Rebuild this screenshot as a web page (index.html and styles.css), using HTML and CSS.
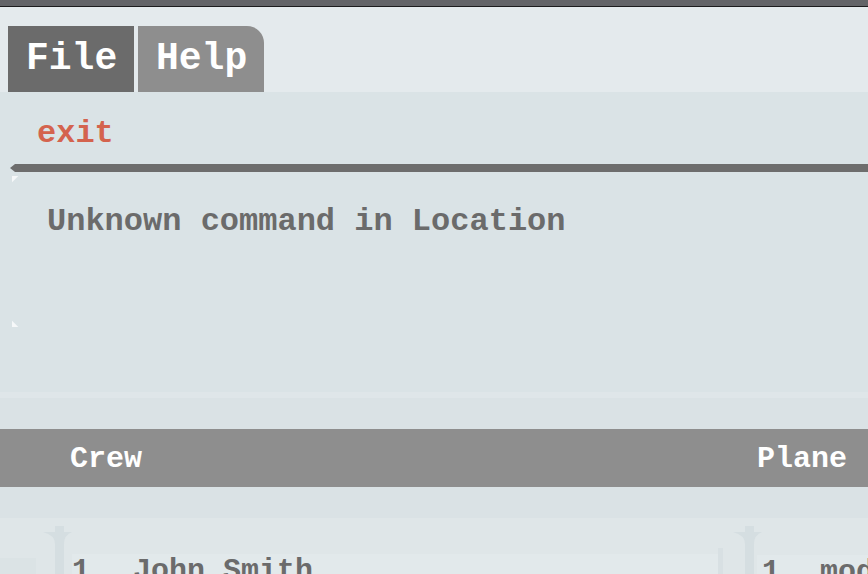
FILE: index.html
```html
<!DOCTYPE html>
<html lang="en">
<head>
<meta charset="utf-8">
<title>Console</title>
<link rel="stylesheet" href="styles.css">
</head>
<body>
  <div class="topbar"></div>
  <nav class="tabs">
    <div class="tab tab-file">File</div>
    <div class="tab tab-help">Help</div>
  </nav>
  <section class="console">
    <div class="cmd">exit</div>
    <div class="rule"></div>
    <div class="output">Unknown command in Location</div>
  </section>
  <div class="strip"></div>
  <div class="spacer"></div>
  <header class="table-head">
    <span>Crew</span>
    <span>Plane</span>
  </header>
  <div class="spacer2"></div>
  <div class="lists">
    <div class="side"></div>
    <div class="handle">
      <svg width="29" height="48" viewBox="0 0 29 48"><path d="M12 0H21V6H29Q21 9 21 18V48H12V18Q12 9 0 6H12Z" fill="#d5dee1"/></svg>
    </div>
    <div class="card card-crew"><span class="num">1.</span><span>John Smith</span></div>
    <div class="divider"></div>
    <div class="handle handle-right">
      <svg width="29" height="48" viewBox="0 0 29 48"><path d="M12 0H21V6H29Q21 9 21 18V48H12V18Q12 9 0 6H12Z" fill="#d5dee1"/></svg>
    </div>
    <div class="card card-plane"><span class="num">1.</span><span>model</span></div>
  </div>
</body>
</html>
```
FILE: styles.css
```css
* { box-sizing: border-box; }
html, body {
  margin: 0;
  padding: 0;
  height: 574px;
  overflow: hidden;
  background: #dfe6e8;
  font-family: "Courier New", "Nimbus Mono PS", "FreeMono", "Liberation Mono", monospace;
  font-weight: bold;
}
.topbar {
  height: 7px;
  background: #636468;
  border-bottom: 1px solid #1c1c1e;
}
.tabs {
  display: flex;
  gap: 4px;
  padding: 19px 0 0 8px;
  background: #e4eaed;
  height: 85px;
}
.tab {
  width: 126px;
  height: 66px;
  line-height: 66px;
  padding-left: 18px;
  font-size: 38px;
  color: #ffffff;
}
.tab-file { background: #6b6b6b; }
.tab-help { background: #8e8e8e; border-top-right-radius: 17px; }
.console {
  height: 300px;
  background: #dae3e6;
  overflow: hidden;
}
.cmd {
  padding: 22px 0 10px 37px;
  height: 72px;
  line-height: 40px;
  font-size: 32px;
  color: #d4634e;
}
.rule {
  height: 8px;
  margin-left: 10px;
  background: #6d6d6d;
  clip-path: polygon(0 50%, 5px 0, 100% 0, 100% 100%, 5px 100%);
}
.output {
  margin: 4px 0 0 12px;
  height: 151px;
  padding: 26px 0 0 35px;
  line-height: 40px;
  font-size: 32px;
  color: #6b6b6b;
  background:
    linear-gradient(135deg, #f6f8f9 0 4px, transparent 5px) top left / 8px 8px no-repeat,
    linear-gradient(45deg, #f6f8f9 0 4px, transparent 5px) bottom left / 8px 8px no-repeat;
}
.strip { height: 6px; background: #dfe6e9; }
.spacer { height: 31px; background: #dae2e5; }
.table-head {
  height: 58px;
  background: #8e8e8e;
  display: flex;
  justify-content: space-between;
  align-items: center;
  padding: 2px 21px 0 70px;
  font-size: 30px;
  line-height: 34px;
  color: #ffffff;
}
.spacer2 { height: 31px; background: #dae2e5; }
.lists {
  display: flex;
  align-items: flex-start;
  height: 56px;
  overflow: hidden;
  background: #dfe6e8;
}
.side {
  flex: none;
  width: 36px;
  height: 20px;
  margin-top: 40px;
  background: #dbe3e5;
}
.handle {
  flex: none;
  width: 29px;
  height: 48px;
  margin: 8px 0 0 7px;
}
.handle svg { display: block; }
.card {
  display: flex;
  gap: 25px;
  font-size: 30px;
  line-height: 34px;
  color: #6b6b6b;
  background: #e2e9eb;
  height: 30px;
  white-space: nowrap;
}
.card-crew {
  flex: none;
  width: 646px;
  margin-top: 36px;
}
.divider {
  flex: none;
  width: 5px;
  height: 30px;
  margin-top: 30px;
  background: #d8e0e3;
}
.handle-right { margin-left: 10px; margin-right: -5px; }
.card-plane {
  flex: 1;
  min-width: 0;
  overflow: hidden;
  margin-top: 37px;
  padding-left: 5px;
  gap: 22px;
}
```
